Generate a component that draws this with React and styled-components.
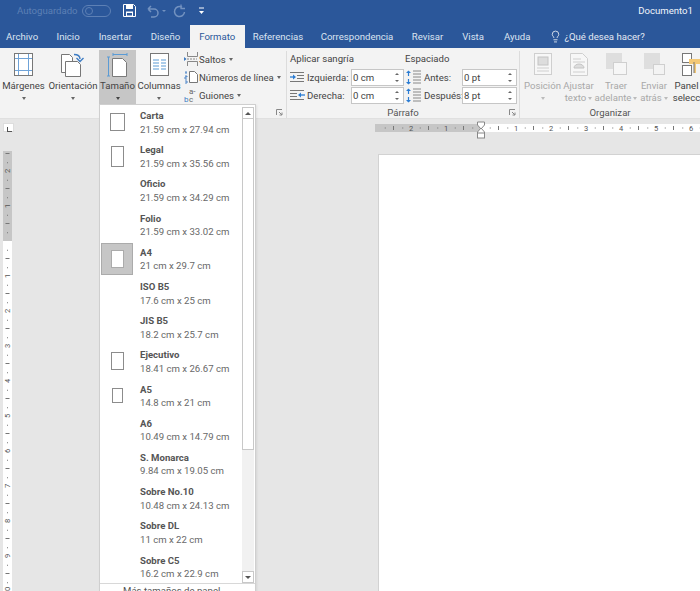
import React from "react";
import styled, { createGlobalStyle } from "styled-components";
import { Lightbulb } from "lucide-react";

const Global = createGlobalStyle`
  html, body { margin: 0; padding: 0; background: #e6e6e6; }
  * { box-sizing: border-box; }
`;
const Page = styled.div`
  position: relative; width: 700px; height: 591px; overflow: hidden;
  background: #e6e6e6; font-family: Roboto, "Open Sans", sans-serif; font-size: 9.6px; color: #444;
  display: flex; flex-direction: column;
`;
const TitleBar = styled.div`
  height: 25px; flex: none; background: #2b579a; display: flex; align-items: center; padding: 0 0 4px 17px; color: #fff;
`;
const AutoSave = styled.span`color: #5d80b5; width: 65px;`;
const Toggle = styled.span`
  width: 29px; height: 12px; border: 1px solid #5d80b5; border-radius: 6px; display: flex; align-items: center; padding-left: 2px;
  &::before { content: ""; width: 6px; height: 6px; border-radius: 50%; border: 1px solid #5d80b5; }
`;
const QuickIcons = styled.div`display: flex; align-items: center; margin-left: 12px; gap: 0;`;
const DocTitle = styled.span`margin-left: auto; margin-right: 7px; color: #f2f5fa;`;
const TabBar = styled.div`
  height: 23px; flex: none; background: #2b579a; display: flex; align-items: stretch; color: #dbe4f1;
`;
const Tab = styled.div`
  display: flex; align-items: center; padding: 0 ${p => p.$pad ?? 10}px; margin-left: ${p => p.$ml ?? 0}px;
  ${p => p.$active && "background:#f3f3f3;color:#2b579a;"}
`;
const Tell = styled.div`display: flex; align-items: center; gap: 2px; margin-left: 9px; color: #e3e9f3;`;
const Ribbon = styled.div`
  height: 71px; flex: none; background: #f3f3f3; border-bottom: 1px solid #e0e0e0; display: flex;
`;
const Group = styled.div`
  position: relative; width: ${p => p.$w}px; flex: none; border-right: 1px solid #dcdcdc; margin-top: 3px; display: flex; flex-direction: column;
  &:last-child { border-right: 0; }
`;
const GroupBody = styled.div`flex: 1; display: flex; min-height: 0; padding-left: ${p => p.$pl ?? 0}px;`;
const GroupLabel = styled.div`height: 11px; flex: none; text-align: center; color: #555; line-height: 11px;`;
const Launcher = styled.svg`position: absolute; right: 3px; bottom: 2px;`;
const Big = styled.div`
  width: ${p => p.$w}px; flex: none; display: flex; flex-direction: column; align-items: center; height: 55px; margin-top: -1px; padding-top: 3px;
  background: ${p => p.$on ? "#c6c6c6" : "transparent"}; color: ${p => p.$off ? "#a8a8a8" : "#444"}; text-align: center; line-height: 12px; white-space: nowrap;
`;
const BigIcon = styled.div`height: 27px; flex: none; display: flex; align-items: flex-start; justify-content: center;`;
const Caret = styled.span`
  display: inline-block; width: 0; height: 0; border: 2px solid transparent; border-top: 3px solid ${p => p.$c || "#666"}; border-bottom: 0; vertical-align: middle; margin-left: ${p => p.$ml ?? 2}px;
`;
const SmallList = styled.div`display: flex; flex-direction: column; margin-left: 2px; margin-top: -1px;`;
const SmallRow = styled.div`height: 18px; flex: none; display: flex; align-items: center; gap: 1px; white-space: nowrap;`;
const ParaCols = styled.div`display: flex; padding-left: 3px;`;
const ParaCol = styled.div`display: flex; flex-direction: column; width: ${p => p.$w}px; flex: none;`;
const ParaHead = styled.div`height: 17px; flex: none; line-height: 15px; white-space: nowrap;`;
const ParaRow = styled.div`height: 18px; flex: none; display: flex; align-items: center; white-space: nowrap;`;
const ParaName = styled.span`width: ${p => p.$w}px; flex: none; margin-left: 2px;`;
const Spin = styled.div`
  width: ${p => p.$w}px; height: 17px; flex: none; border: 1px solid #c6c6c6; background: #fff; display: flex; align-items: center; padding-left: 1px; position: relative;
  &::after { content: ""; position: absolute; right: 4px; top: 3px; width: 0; height: 0; border: 2px solid transparent; border-bottom: 2px solid #666; border-top: 0; }
  &::before { content: ""; position: absolute; right: 4px; bottom: 3px; width: 0; height: 0; border: 2px solid transparent; border-top: 2px solid #666; border-bottom: 0; }
`;
const Workspace = styled.div`flex: 1; display: flex; min-height: 0;`;
const VCol = styled.div`width: 16px; flex: none; display: flex; flex-direction: column; align-items: flex-start; padding: 4px 0 0 3px;`;
const TabStop = styled.div`
  width: 11px; height: 11px; background: #fff; border: 1px solid #ddd; position: relative;
  &::after { content: ""; position: absolute; left: 3px; top: 3px; width: 4px; height: 4px; border-left: 1px solid #555; border-bottom: 1px solid #555; }
`;
const Main = styled.div`flex: 1; display: flex; flex-direction: column; padding-top: 5px; min-width: 0;`;
const Doc = styled.div`
  flex: 1; margin: 22px 0 0 362px; background: #fff; border: 1px solid #d2d2d2; border-right: 0; border-bottom: 0;
`;
const Menu = styled.div`
  position: absolute; left: 99px; top: 104px; width: 157px; height: 492px; background: #fff; border: 1px solid #cfcfcf; box-shadow: 1px 1px 2px rgba(0,0,0,.08);
  display: flex; flex-direction: column;
`;
const MenuBody = styled.div`height: 478px; display: flex; flex: none;`;
const MenuList = styled.div`flex: 1; min-width: 0;`;
const MenuItem = styled.div`height: 34.2px; display: flex; align-items: center;`;
const Thumb = styled.div`width: 40px; display: flex; align-items: center; flex: none;`;
const PaperBox = styled.div`
  width: 32px; height: 32px; margin-left: 1px; display: flex; align-items: center; justify-content: center;
  ${p => p.$on && "background:#c6c6c6;border:1px solid #ababab;"}
`;
const Paper = styled.div`width: ${p => p.$w}px; height: ${p => p.$h}px; background: #fff; border: 1px solid ${p => p.$on ? "#ababab" : "#8c8c8c"};`;
const MenuText = styled.div`line-height: 13.5px; padding-top: 1px; white-space: nowrap;`;
const MenuTitle = styled.div`font-weight: 700; color: #555;`;
const MenuSub = styled.div`color: #686868;`;
const Scroll = styled.div`
  width: 12px; flex: none; margin: 2px 1px 0 0; display: flex; flex-direction: column; background: #f1f1f1; height: 476px;
`;
const ScrollBtn = styled.div`height: 12px; flex: none; background: #fff; border: 1px solid #c8c8c8; display: flex; align-items: center; justify-content: center;`;
const ScrollThumb = styled.div`height: 331px; flex: none; background: #fff; border: 1px solid #c8c8c8; border-top: 0;`;
const ScrollGap = styled.div`flex: 1;`;
const Arrow = styled.span`
  width: 0; height: 0; border: 3px solid transparent;
  ${p => p.$up ? "border-bottom:3px solid #555;border-top:0;" : "border-top:3px solid #555;border-bottom:0;"}
`;
const MenuFooter = styled.div`
  border-top: 1px solid #d8d8d8; padding-left: 23px; color: #555; line-height: 13px; white-space: nowrap;
`;
const RulerSvg = styled.svg`display: block; flex: none; overflow: visible;`;
const RulerText = styled.text`font-family: Roboto, sans-serif; font-size: 7.5px; fill: #555;`;
const HyphenText = styled.text`font-family: Roboto, sans-serif; font-size: 8px; fill: ${p => p.$c};`;

const W = "#ffffff";
const Save = () => (
  <svg width="13" height="13" viewBox="0 0 13 13"><path d="M.5.5h10l2 2v10H.5z" fill="none" stroke={W} /><rect x="3" y="1" width="7" height="4" fill={W} /><rect x="3" y="7.5" width="7" height="5" fill={W} /><rect x="4" y="9" width="5" height="2.5" fill="#2b579a" /></svg>
);
const Undo = () => (
  <svg width="28" height="14" viewBox="0 0 28 14" style={{ marginLeft: 10 }}><path d="M2 5h6a4 4 0 0 1 0 8H5M2 5l3-3M2 5l3 3" fill="none" stroke="#7392c0" strokeWidth="1.5" /><path d="M16 6h4l-2 2z" fill="#7392c0" /></svg>
);
const Redo = () => (
  <svg width="13" height="14" viewBox="0 0 13 14" style={{ marginLeft: -1 }}><path d="M9 3.2A5 5 0 1 0 11.5 8" fill="none" stroke="#7392c0" strokeWidth="1.5" /><path d="M8 .5v4h4" fill="none" stroke="#7392c0" strokeWidth="1.3" /></svg>
);
const Customize = () => (
  <svg width="7" height="8" viewBox="0 0 7 8" style={{ marginLeft: 12 }}><path d="M1 1h5" stroke={W} /><path d="M1 4h5L3.500 7z" fill={W} /></svg>
);
const MargenesIcon = () => (
  <svg width="19" height="23" viewBox="0 0 19 23"><rect x=".5" y=".5" width="18" height="22" fill="#fff" stroke="#777" /><path d="M4.500 1v21M14.500 1v21M1 5.500h17M1 17.500h17" stroke="#6fa3d8" /></svg>
);
const OrientIcon = () => (
  <svg width="25" height="24" viewBox="0 0 25 24"><path d="M.5 1.500h8l3 3v15H.5z" fill="#fff" stroke="#777" /><path d="M4.500 8.500h12l3 3v12h-15z" fill="#fff" stroke="#777" /><path d="M13 1.500c4 0 6 1 6 4.500" fill="none" stroke="#3d7cc4" strokeWidth="1.400" /><path d="M15.500 5l3.500 3.500L22.500 5" fill="none" stroke="#3d7cc4" strokeWidth="1.400" /></svg>
);
const TamanoIcon = () => (
  <svg width="21" height="24" viewBox="0 0 21 24"><path d="M6 1.500h14M6 0v3M20 0v3M1.500 4v19M0 4h3M0 23h3" stroke="#5b9bd5" fill="none" /><path d="M5.500 5.500h10l4 4v14h-14z" fill="#fff" stroke="#7a7a7a" /></svg>
);
const ColumnasIcon = () => (
  <svg width="19" height="23" viewBox="0 0 19 23"><rect x=".5" y=".5" width="18" height="22" fill="#fff" stroke="#777" /><path d="M3 7h6M11 7h5M3 10h6M11 10h5M3 13h6M11 13h5M3 16h6M11 16h5" stroke="#5b9bd5" /></svg>
);
const SaltosIcon = () => (
  <svg width="14" height="14" viewBox="0 0 14 14"><path d="M3.500 0v4.500h10V0M3.500 14V9.500h10V14" fill="none" stroke="#888" /><path d="M0 7h13" stroke="#888" strokeDasharray="2 1" /><path d="M0 5l2.500 2L0 9z" fill="#3d7cc4" /></svg>
);
const NumerosIcon = () => (
  <svg width="14" height="14" viewBox="0 0 14 14"><path d="M5.500 1.500h5l3 3v8h-8z" fill="#fff" stroke="#777" /><path d="M1 2h2M2 2v2M1 6h2v1H1v2h2M1 11h2v2H1" stroke="#3d7cc4" fill="none" strokeWidth=".9" /></svg>
);
const GuionesIcon = () => (
  <svg width="14" height="15" viewBox="0 0 14 15">
    <HyphenText x="5" y="6" $c="#666">a-</HyphenText>
    <HyphenText x="0" y="14" $c="#3d7cc4">b</HyphenText>
    <HyphenText x="5" y="14" $c="#666">c</HyphenText>
  </svg>
);
const IndentIcon = ({ right }) => (
  <svg width="15" height="11" viewBox="0 0 15 11">
    {right ? (
      <>
        <path d="M0 .5h14M0 3.500h7M0 6.500h7M0 9.500h14" stroke="#777" />
        <path d="M10 5h5" stroke="#2b7cd3" strokeWidth="1.300" />
        <path d="M11 2.500L8 5l3 2.500z" fill="#2b7cd3" />
      </>
    ) : (
      <>
        <path d="M0 .5h14M7 3.500h7M7 6.500h7M0 9.500h14" stroke="#777" />
        <path d="M0 5h4" stroke="#2b7cd3" strokeWidth="1.300" />
        <path d="M3 2.500l3 2.500-3 2.500z" fill="#2b7cd3" />
      </>
    )}
  </svg>
);
const SpaceIcon = () => (
  <svg width="17" height="15" viewBox="0 0 17 15"><path d="M8 1h8M8 4h8M8 7h8M8 10h8M8 13h8" stroke="#888" /><path d="M3.500 6V1M3.500 9v5" stroke="#2b7cd3" strokeWidth="1.200" /><path d="M1 3l2.500-2.500L6 3zM1 12l2.500 2.500L6 12z" fill="#2b7cd3" /></svg>
);
const PosIcon = () => (
  <svg width="18" height="22" viewBox="0 0 18 22"><rect x=".5" y=".5" width="17" height="21" fill="#f7f7f7" stroke="#cfcfcf" /><rect x="4" y="4" width="10" height="8" fill="#ddd" stroke="#c4c4c4" /><path d="M3 15h12M3 18h12" stroke="#cfcfcf" /></svg>
);
const WrapIcon = () => (
  <svg width="18" height="23" viewBox="0 0 18 23"><path d="M.5.500h12l5 5v17H.5z" fill="#f7f7f7" stroke="#cfcfcf" /><path d="M3 6h8M3 9h12M3 19h12" stroke="#cfcfcf" /><path d="M4 15a5 4 0 0 1 10 0z" fill="#ddd" stroke="#c4c4c4" /></svg>
);
const LayerIcon = ({ front }) => (
  <svg width="21" height="22" viewBox="0 0 21 22"><rect x="0" y="0" width="16" height="16" fill="#dedede" /><rect x={front ? 9.500 : 7.500} y={front ? 11.500 : 9.500} width={front ? 11 : 13} height={front ? 10 : 12} fill={front ? "#f3f3f3" : "#f6f6f6"} stroke="#cfcfcf" /></svg>
);
const PanelIcon = () => (
  <svg width="22" height="24" viewBox="0 0 22 24"><rect x=".5" y=".5" width="9" height="9" fill="#fff" stroke="#777" /><rect x=".5" y="12.500" width="9" height="10" fill="#fff" stroke="#777" /><path d="M7 6h15v5H14v9h-2V11H7z" fill="#f3c876" /><path d="M12 9v11" stroke="#777" /></svg>
);
const LauncherIcon = () => (
  <Launcher width="7" height="7" viewBox="0 0 7 7"><path d="M.5 6V.5H6M3 3l3 3M6 3.500V6H3.500" fill="none" stroke="#888" /></Launcher>
);

const HRuler = () => {
  const zero = 481, unit = 35;
  const left = 375;
  const ticks = [];
  for (let i = -11; i <= 25; i++) {
    const x = zero + i * unit / 4;
    if (i % 4 === 0) {
      const n = Math.abs(i / 4);
      if (n > 0) ticks.push(<RulerText key={i} x={x} y={7} textAnchor="middle">{n}</RulerText>);
    } else if (Math.abs(i % 4) === 2) {
      ticks.push(<path key={i} d={`M${x} 2v4`} stroke="#777" />);
    } else {
      ticks.push(<rect key={i} x={x} y={3.500} width="1" height="1" fill="#777" />);
    }
  }
  return (
    <RulerSvg width="700" height="8" viewBox="0 0 700 8" style={{ marginLeft: -16 }}>
      <rect x={left} y="0" width={zero - left} height="8" fill="#c6c6c6" />
      <rect x={zero} y="0" width="219" height="8" fill="#fff" />
      {ticks}
      <path d="M477.500 -2h7v3l-3.500 4-3.500-4zM477.500 11v-3l3.500-4 3.500 4v3z" fill="#fff" stroke="#888" />
      <rect x="477.500" y="9" width="7" height="5" fill="#fff" stroke="#888" />
    </RulerSvg>
  );
};

const VRuler = () => {
  const zero = 90, unit = 35;
  const ticks = [];
  for (let i = -10; i <= 40; i++) {
    const y = zero + i * unit / 4;
    if (i % 4 === 0) {
      const n = Math.abs(i / 4);
      if (n > 0) ticks.push(<RulerText key={i} x="0" y="0" textAnchor="middle" transform={`translate(7 ${y}) rotate(-90)`}>{n}</RulerText>);
    } else if (Math.abs(i % 4) === 2) {
      ticks.push(<path key={i} d={`M2.500 ${y}h4`} stroke="#777" />);
    } else {
      ticks.push(<rect key={i} x="4" y={y} width="1" height="1" fill="#777" />);
    }
  }
  return (
    <RulerSvg width="9" height="440" viewBox="0 0 9 440" style={{ marginTop: 19 }}>
      <rect width="9" height={zero} fill="#c6c6c6" />
      <rect y={zero} width="9" height="350" fill="#fff" />
      {ticks}
    </RulerSvg>
  );
};

const papers = [
  ["Carta", "21.59 cm x 27.94 cm", 15, 18],
  ["Legal", "21.59 cm x 35.56 cm", 13, 21],
  ["Oficio", "21.59 cm x 34.29 cm"],
  ["Folio", "21.59 cm x 33.02 cm"],
  ["A4", "21 cm x 29.7 cm", 13, 18, true],
  ["ISO B5", "17.6 cm x 25 cm"],
  ["JIS B5", "18.2 cm x 25.7 cm"],
  ["Ejecutivo", "18.41 cm x 26.67 cm", 13, 18],
  ["A5", "14.8 cm x 21 cm", 11, 15],
  ["A6", "10.49 cm x 14.79 cm"],
  ["S. Monarca", "9.84 cm x 19.05 cm"],
  ["Sobre No.10", "10.48 cm x 24.13 cm"],
  ["Sobre DL", "11 cm x 22 cm"],
  ["Sobre C5", "16.2 cm x 22.9 cm"],
];

const tabs = [
  ["Archivo", -3, 9], ["Inicio", 0, 9.5], ["Insertar", 0, 9.5], ["Diseño", 0, 9.5], ["Formato", 0, 9.5, true],
  ["Referencias", 0, 8], ["Correspondencia", 0, 9.5], ["Revisar", 0, 9], ["Vista", 0, 10], ["Ayuda", 0, 10],
];

export default function App() {
  return (
    <Page>
      <Global />
      <TitleBar>
        <AutoSave>Autoguardado</AutoSave>
        <Toggle />
        <QuickIcons><Save /><Undo /><Redo /><Customize /></QuickIcons>
        <DocTitle>Documento1</DocTitle>
      </TitleBar>
      <TabBar>
        {tabs.map(([t, ml, pad, on]) => <Tab key={t} $ml={ml} $pad={pad} $active={on}>{t}</Tab>)}
        <Tell><Lightbulb size={13} strokeWidth={1.4} color="#fff" />¿Qué desea hacer?</Tell>
      </TabBar>
      <Ribbon>
        <Group $w={287}>
          <GroupBody>
            <Big $w={47}><BigIcon><MargenesIcon /></BigIcon>Márgenes<div><Caret $ml={0} /></div></Big>
            <Big $w={52}><BigIcon><OrientIcon /></BigIcon>Orientación<div><Caret $ml={0} /></div></Big>
            <Big $w={37} $on><BigIcon><TamanoIcon /></BigIcon>Tamaño<div><Caret $ml={0} $c="#444" /></div></Big>
            <Big $w={46}><BigIcon><ColumnasIcon /></BigIcon>Columnas<div><Caret $ml={0} /></div></Big>
            <SmallList>
              <SmallRow><SaltosIcon />Saltos<Caret /></SmallRow>
              <SmallRow><NumerosIcon />Números de línea<Caret /></SmallRow>
              <SmallRow><GuionesIcon />Guiones<Caret /></SmallRow>
            </SmallList>
          </GroupBody>
          <LauncherIcon />
        </Group>
        <Group $w={233}>
          <GroupBody>
            <ParaCols>
              <ParaCol $w={115}>
                <ParaHead>Aplicar sangría</ParaHead>
                <ParaRow><IndentIcon /><ParaName $w={44}>Izquierda:</ParaName><Spin $w={53}>0 cm</Spin></ParaRow>
                <ParaRow><IndentIcon right /><ParaName $w={44}>Derecha:</ParaName><Spin $w={53}>0 cm</Spin></ParaRow>
              </ParaCol>
              <ParaCol $w={112}>
                <ParaHead>Espaciado</ParaHead>
                <ParaRow><SpaceIcon /><ParaName $w={38}>Antes:</ParaName><Spin $w={55}>0 pt</Spin></ParaRow>
                <ParaRow><SpaceIcon /><ParaName $w={38}>Después:</ParaName><Spin $w={55}>8 pt</Spin></ParaRow>
              </ParaCol>
            </ParaCols>
          </GroupBody>
          <GroupLabel>Párrafo</GroupLabel>
          <LauncherIcon />
        </Group>
        <Group $w={180}>
          <GroupBody $pl={3}>
            <Big $w={39} $off><BigIcon><PosIcon /></BigIcon>Posición<div><Caret $ml={0} $c="#bbb" /></div></Big>
            <Big $w={33} $off><BigIcon><WrapIcon /></BigIcon>Ajustar<div>texto<Caret $c="#bbb" /></div></Big>
            <Big $w={42} $off><BigIcon><LayerIcon /></BigIcon>Traer<div>adelante<Caret $c="#bbb" /></div></Big>
            <Big $w={34} $off><BigIcon><LayerIcon front /></BigIcon>Enviar<div>atrás<Caret $c="#bbb" /></div></Big>
            <Big $w={44}><BigIcon><PanelIcon /></BigIcon>Panel de<div>selección</div></Big>
          </GroupBody>
          <GroupLabel>Organizar</GroupLabel>
        </Group>
      </Ribbon>
      <Workspace>
        <VCol><TabStop /><VRuler /></VCol>
        <Main><HRuler /><Doc /></Main>
      </Workspace>
      <Menu>
        <MenuBody>
          <MenuList>
            {papers.map(([n, d, w, h, on]) => (
              <MenuItem key={n}>
                <Thumb>
                  {w ? <PaperBox $on={on}><Paper $w={w} $h={h} $on={on} /></PaperBox> : null}
                </Thumb>
                <MenuText><MenuTitle>{n}</MenuTitle><MenuSub>{d}</MenuSub></MenuText>
              </MenuItem>
            ))}
          </MenuList>
          <Scroll>
            <ScrollBtn><Arrow $up /></ScrollBtn>
            <ScrollThumb />
            <ScrollGap />
            <ScrollBtn><Arrow /></ScrollBtn>
          </Scroll>
        </MenuBody>
        <MenuFooter>Más tamaños de papel...</MenuFooter>
      </Menu>
    </Page>
  );
}
